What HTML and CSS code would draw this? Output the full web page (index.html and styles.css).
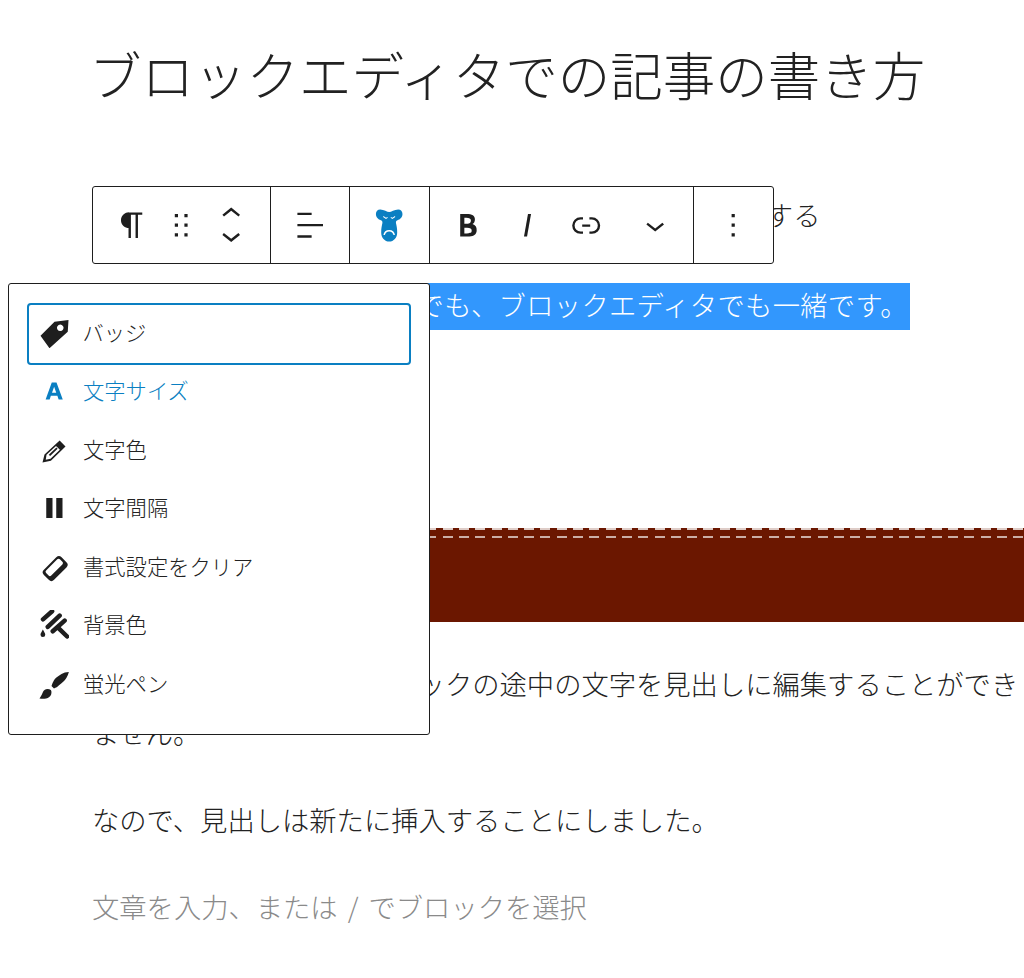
FILE: index.html
```html
<!DOCTYPE html>
<html lang="ja">
<head>
<meta charset="utf-8">
<title>ブロックエディタでの記事の書き方</title>
<link rel="stylesheet" href="styles.css">
</head>
<body>
<main class="editor">
  <h1 class="post-title">ブロックエディタでの記事の書き方</h1>
  <p class="para first">まずは1つ目の見出しの書き方について、順番にご説明する</p>
  <p class="para second"><span class="selected">記事の書き方はクラシックでも、ブロックエディタでも一緒です。</span></p>
  <div class="band"></div>
  <p class="para">ブロックエディタは、ブロックの途中の文字を見出しに編集することができません。</p>
  <p class="para">なので、見出しは新たに挿入することにしました。</p>
  <p class="para placeholder">文章を入力、または / でブロックを選択</p>
</main>

<div class="toolbar">
  <div class="group group-a">
    <span class="tb"><svg viewBox="0 0 24 24"><path d="M18.3 4H9.900v-.1l-.9.2c-2.300.4-4 2.400-4 4.800s1.700 4.400 4 4.800l.7.1V20h1.500V5.500h2.900V20h1.500V5.500h2.700V4z"/></svg></span>
    <span class="tb"><svg viewBox="0 0 24 24"><path d="M8 7h2V5H8v2zm0 6h2v-2H8v2zm0 6h2v-2H8v2zm6-14v2h2V5h-2zm0 8h2v-2h-2v2zm0 6h2v-2h-2v2z"/></svg></span>
    <span class="tb"><svg viewBox="0 0 24 24"><path d="M6.500 5.400L12 1l5.500 4.400-.9 1.200L12 3 7.500 6.600z"/><path d="M17.500 18.100L12 22.500l-5.500-4.400.9-1.200L12 20.500l4.500-3.600z"/></svg></span>
  </div>
  <div class="group group-b">
    <span class="tb"><svg viewBox="0 0 24 24"><path d="M4 19.800h8.900v-1.500H4v1.500zm8.900-15.600H4v1.500h8.900V4.200zm-8.900 7v1.500h16v-1.500H4z"/></svg></span>
  </div>
  <div class="group group-c">
    <span class="tb"><svg viewBox="0 0 24 24"><path class="blue" fill-rule="evenodd" d="M12 3.800C10.700 3.800 8.800 2.200 6.400 2.200 4.700 2.200 3.700 3.500 3.700 5 3.700 7 5.200 8.400 6.800 8.900 7.800 9.200 7.900 10 7.700 11 7.400 12.500 7 14 7 16.500 7 19.800 9.200 22.200 12 22.200 14.800 22.200 17 19.800 17 16.500 17 14 16.600 12.500 16.300 11 16.100 10 16.200 9.200 17.200 8.900 18.800 8.400 20.300 7 20.300 5 20.300 3.500 19.300 2.200 17.600 2.200 15.200 2.200 13.300 3.800 12 3.800ZM8.400 6.300 10 7.300 10.900 6.900 11.100 7.300 10 8.100 8.200 6.900ZM15.600 6.300 15.800 6.900 14 8.100 12.900 7.300 13.100 6.900 14 7.300ZM12 15C14 15 15.400 16.200 15.600 18.200H14.700C14.500 16.800 13.400 15.900 12 15.900S9.500 16.800 9.300 18.200H8.400C8.600 16.200 10 15 12 15Z"/></svg></span>
  </div>
  <div class="group group-d">
    <span class="tb"><svg viewBox="0 0 24 24"><path d="M14.700 11.300c1-.6 1.500-1.600 1.500-3 0-2.300-1.700-3.300-5.300-3.300H7v14h5.800c1.400 0 2.500-.3 3.300-1 .8-.7 1.200-1.700 1.200-2.900.1-1.900-.8-3.100-2.600-3.800zm-5.100-4h1.200c1.900 0 2.900.6 2.900 1.800 0 .7-.2 1.200-.6 1.500-.4.3-1 .5-1.900.5H9.600V7.300zm3.500 9.400c-.5.3-1.100.5-1.900.5H9.600v-3.600h1.700c1.900 0 2.900.6 2.900 1.800-.1.600-.2 1.100-.6 1.300z"/></svg></span>
    <span class="tb"><svg viewBox="0 0 24 24"><path d="M12.500 5L10 19h1.900l2.500-14z"/></svg></span>
    <span class="tb"><svg viewBox="0 0 24 24"><path d="M10 17.389H8.444A5.194 5.194 0 1 1 8.444 7H10v1.500H8.444a3.694 3.694 0 0 0 0 7.389H10v1.500ZM14 7h1.556a5.194 5.194 0 0 1 0 10.390H14v-1.500h1.556a3.694 3.694 0 0 0 0-7.390H14V7Zm-4.500 6h5v-1.500h-5V13Z"/></svg></span>
    <span class="tb tb-more"><svg viewBox="0 0 24 24"><path d="M17.500 11.600L12 16l-5.500-4.400.9-1.200L12 14l4.500-3.600z"/></svg></span>
  </div>
  <div class="group group-e">
    <span class="tb"><svg viewBox="0 0 24 24"><path d="M13 19h-2v-2h2v2zm0-6h-2v-2h2v2zm0-6h-2V5h2v2z"/></svg></span>
  </div>
</div>

<div class="menu">
  <div class="item focused">
    <svg viewBox="0 0 24 24"><path fill-rule="evenodd" d="M1.200 14.200 12.400 3 23.600 1.600 23 11 8.400 24.200ZM17 5.200a2.600 2.600 0 1 0 .01 0Z"/></svg>
    <span>バッジ</span>
  </div>
  <div class="item active">
    <svg viewBox="0 0 24 24"><path fill-rule="evenodd" d="M10.200 5.200h3.800l5 13.600h-3.300l-1-3h-5.200l-1 3H5.300ZM12.100 8.600 10.400 13.400h3.400Z"/></svg>
    <span>文字サイズ</span>
  </div>
  <div class="item">
    <svg viewBox="0 0 24 24"><path fill-rule="evenodd" d="M2.800 22 4.400 15.500 16.500 4.400 21.200 9.200 9.500 20.500ZM6 15.800 13.600 8.700 16.700 11.800 9.200 19 5.400 19.700Z"/><path d="M7.800 15.700 13.900 10 14.900 11 8.900 16.800Z"/></svg>
    <span>文字色</span>
  </div>
  <div class="item">
    <svg viewBox="0 0 24 24"><path d="M5.800 4h5v16h-5zM13.800 4h5v16h-5z"/></svg>
    <span>文字間隔</span>
  </div>
  <div class="item">
    <svg viewBox="0 0 24 24"><g transform="rotate(-45 12.900 13.200)"><rect x="2.900" y="7.500" width="20" height="11.500" rx="3"/><rect class="hole" x="5.200" y="9.200" width="15.600" height="5.800" rx="1.500"/></g></svg>
    <span>書式設定をクリア</span>
  </div>
  <div class="item">
    <svg viewBox="0 0 24 24"><path class="ln" d="M3.200 7.500 10.500 1M7 13.500 16.500 4.500M11 17 20.500 8.500"/><path class="ln" d="M15.600 14.500 22.500 21.200"/><path d="M3.100 15.600C4 17.500 5 18.500 5 19.800a1.900 1.900 0 0 1-3.800 0C1.200 18.500 2.200 17.500 3.100 15.600Z"/></svg>
    <span>背景色</span>
  </div>
  <div class="item">
    <svg viewBox="0 0 24 24"><path d="M23.900 2.400C21.500 2.500 19.800 3 18 4 15 5.800 12.800 7.300 12 9 11.100 10.600 10.500 12 10 13.500L12 15.500C13.500 15 15 14.200 16 13 18.500 11.200 20.500 9.500 22 7 22.800 5.500 23.500 4 23.900 2.400Z"/><path d="M9.500 16.800C8 15.800 5.700 15.800 4.400 16.800 3 18 3 19.200 2.300 20.300 1.800 21.300 1 22.500.4 23.500 2.500 24 4.200 23.900 5.700 23.500 7.700 23.100 9 22 9.700 20.300 10.100 19 10.100 17.800 9.500 16.800Z"/></svg>
    <span>蛍光ペン</span>
  </div>
</div>
</body>
</html>
```
FILE: styles.css
```css
html, body {
  margin: 0;
  padding: 0;
  background: #fff;
}
body {
  position: relative;
  width: 1024px;
  height: 978px;
  overflow: hidden;
  font-family: "Noto Sans CJK JP", "Noto Sans", sans-serif;
  font-weight: 300;
  color: #222;
}
.editor {
  padding: 37px 0 0 92px;
}
.post-title {
  margin: 0 0 0 -3px;
  height: 153px;
  font-size: 52.500px;
  line-height: 72px;
  font-weight: 300;
  white-space: nowrap;
}
.para {
  margin: 0 0 38px;
  font-size: 27.300px;
  line-height: 49px;
}
.first {
  margin-bottom: 43px;
  letter-spacing: 0.27px;
  white-space: nowrap;
}
.second {
  height: 45px;
  margin-bottom: 197px;
  padding-bottom: 4px;
  line-height: 45px;
  white-space: nowrap;
}
.selected {
  display: inline-block;
  margin-left: -6px;
  padding-right: 2px;
  padding-bottom: 4px;
  margin-bottom: -4px;
  letter-spacing: 0.3px;
  background: #3297fd;
  color: #fff;
  line-height: 43px;
}
.band {
  height: 94px;
  margin-bottom: 37px;
  background-color: #6b1700;
  background-image:
    repeating-linear-gradient(90deg, rgba(255,255,255,0.78) 0 2.100px, transparent 2.100px 8.400px, rgba(255,255,255,0.78) 8.400px 16.300px),
    repeating-linear-gradient(90deg, rgba(255,255,255,0.65) 0 2.100px, transparent 2.100px 8.400px, rgba(255,255,255,0.65) 8.400px 16.300px);
  background-size: 100% 2px, 100% 2px;
  background-position: 0 0, 0 8px;
  background-repeat: no-repeat;
}
.placeholder {
  color: #8a8a8a;
  word-spacing: 4px;
}
.toolbar {
  position: absolute;
  left: 92px;
  top: 186px;
  display: flex;
  height: 78px;
  box-sizing: border-box;
  border: 1.500px solid #1e1e1e;
  border-radius: 3px;
  background: #fff;
}
.group {
  display: flex;
  align-items: center;
  box-sizing: border-box;
  border-left: 1.500px solid #1e1e1e;
}
.group:first-child {
  border-left: 0;
}
.group-a {
  width: 177px;
  padding-left: 19px;
  gap: 9.500px;
}
.group-b {
  width: 79px;
  justify-content: center;
}
.group-c {
  width: 80px;
  justify-content: center;
}
.group-d {
  width: 264px;
  padding-left: 18px;
  gap: 19px;
}
.group-e {
  width: 79.500px;
  justify-content: center;
}
.tb {
  display: flex;
  width: 40px;
  height: 40px;
  justify-content: center;
  align-items: center;
}
.tb-more {
  margin-left: 10px;
}
.tb svg {
  display: block;
  width: 38.400px;
  height: 38.400px;
  fill: #1e1e1e;
}
.tb svg .blue {
  fill: #0a7fc2;
}
.menu {
  position: absolute;
  left: 8px;
  top: 283px;
  width: 422px;
  height: 452px;
  box-sizing: border-box;
  padding: 19px 18px;
  border: 1.500px solid #1e1e1e;
  border-radius: 3px;
  background: #fff;
}
.item {
  display: flex;
  align-items: center;
  gap: 14px;
  height: 58.500px;
  box-sizing: border-box;
  padding-left: 12px;
  padding-bottom: 2px;
  font-size: 21.300px;
}
.item span {
  padding-bottom: 3px;
}
.item svg {
  flex: none;
  width: 30px;
  height: 30px;
  fill: #1e1e1e;
}
.item .hole {
  fill: #fff;
}
.item .ln {
  fill: none;
  stroke: #1e1e1e;
  stroke-width: 3.600px;
  stroke-linecap: round;
}
.focused {
  height: 62px;
  margin-bottom: -2px;
  border: 2.500px solid #0a7fc2;
  border-radius: 4px;
  padding-left: 9.500px;
}
.active {
  color: #0a7fc2;
}
.active svg {
  fill: #0a7fc2;
}
```
